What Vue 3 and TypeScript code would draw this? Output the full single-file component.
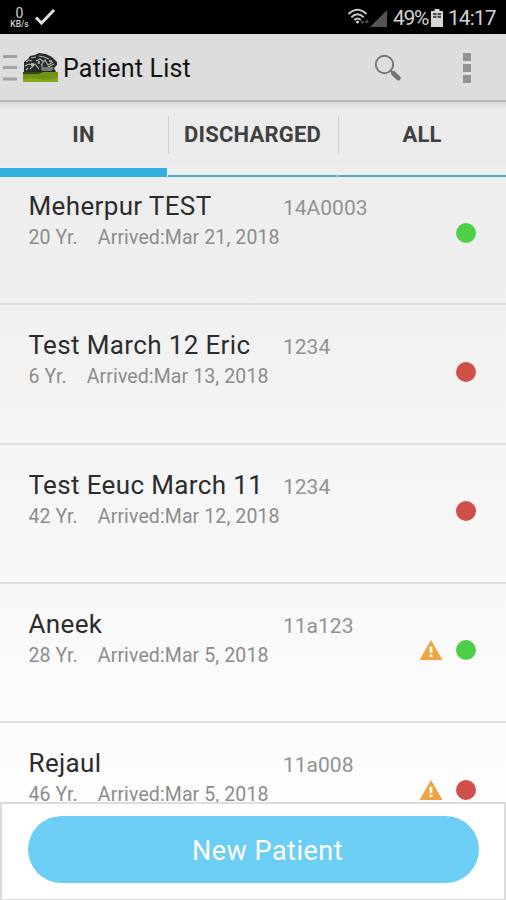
<script setup lang="ts">
interface Patient {
  name: string
  code: string
  age: number
  arrived: string
  status: 'ok' | 'alert'
  warning: boolean
}

const tabs: string[] = ['IN', 'DISCHARGED', 'ALL']
const activeTab = 'IN'

const patients: Patient[] = [
  { name: 'Meherpur TEST', code: '14A0003', age: 20, arrived: 'Mar 21, 2018', status: 'ok', warning: false },
  { name: 'Test March 12 Eric', code: '1234', age: 6, arrived: 'Mar 13, 2018', status: 'alert', warning: false },
  { name: 'Test Eeuc March 11', code: '1234', age: 42, arrived: 'Mar 12, 2018', status: 'alert', warning: false },
  { name: 'Aneek', code: '11a123', age: 28, arrived: 'Mar 5, 2018', status: 'ok', warning: true },
  { name: 'Rejaul', code: '11a008', age: 46, arrived: 'Mar 5, 2018', status: 'alert', warning: true },
]
</script>

<template>
  <div class="screen">
    <header class="status">
      <div class="speed"><span class="speed-num">0</span><span class="speed-unit">KB/s</span></div>
      <svg class="check" width="22" height="18" viewBox="0 0 22 18">
        <path d="M2 9.500 7.500 15 20 2" fill="none" stroke="#dedede" stroke-width="3" />
      </svg>
      <svg class="wifi" width="24" height="20" viewBox="0 0 24 20">
        <g fill="none" stroke="#c8c8c8" stroke-width="1.900">
          <path d="M1.500 7Q10.500-1.500 19.500 7" />
          <path d="M4.300 10.200Q10.500 4.200 16.700 10.200" />
          <path d="M7.200 13Q10.500 9.900 13.800 13" />
        </g>
        <circle cx="10.500" cy="15" r="1.600" fill="#c8c8c8" />
        <path d="M13.500 14h4l-2 4zM18 16h4l-2-4z" fill="#4a4a4a" />
      </svg>
      <svg class="signal" width="17" height="17" viewBox="0 0 17 17"><path d="M0 17 17 0V17Z" fill="#545454" /></svg>
      <span class="percent">49%</span>
      <svg class="battery" width="12" height="18" viewBox="0 0 12 18">
        <path d="M3.500 0h5v2.500h-5zM0 2h12v16H0z" fill="#d6d6d6" />
        <path d="M2 4h3.500v2.300H2zM6.500 4H10v2.300H6.500zM2 7h3.500v2H2zM6.500 7H10v2H6.500z" fill="#4c4c4c" />
      </svg>
      <span class="clock">14:17</span>
    </header>

    <div class="appbar">
      <svg class="drawer" width="14" height="28" viewBox="0 0 14 28">
        <path d="M0 2.500h14M0 13.500h14M0 25h14" stroke="#a2a2a2" stroke-width="3.200" />
      </svg>
      <svg class="logo" width="35" height="29" viewBox="0 0 35 29">
        <path d="M1 20V9L5 6 7 3 12 2 16 0 23 1 29 4 34 9V12L31 15 33 19V20Z" fill="#282c28" />
        <g fill="none" stroke="#aeb3ad" stroke-width="1.100">
          <path d="M3 9 6 7 9 8M8 5l5-1M16 3l5 1 5 2M2 13l4-2 5 1M7 16l5-5 4 5M13 8l4-2 4 3M18 12l4-5 3 5 5-3M25 14l6-3M19 17v-6M5 15l-2 2" />
        </g>
        <path d="M20 14h11l-2 4H19Z" fill="#777c77" />
        <path d="M8 10h3v3H8zM15 8h2v3h-2zM26 7h3v2h-3z" fill="#d0d2cf" opacity=".7" />
        <path d="M0 19h35v10H0z" fill="#6f9416" />
        <path d="M0 19h20l-4 2H0z" fill="#34451a" />
        <path d="M0 26q8-2 17 0t18-2v5H0z" fill="#82a916" />
      </svg>
      <h1 class="title">Patient List</h1>
      <svg class="search" width="28" height="28" viewBox="0 0 28 28">
        <circle cx="10.500" cy="10.500" r="8.700" fill="none" stroke="#747474" stroke-width="1.900" />
        <path d="M16.500 16.500 19 19" stroke="#747474" stroke-width="2" />
        <path d="M19.500 19.500 24.300 24" stroke="#747474" stroke-width="5" stroke-linecap="round" />
      </svg>
      <div class="more"><i /><i /><i /></div>
    </div>

    <nav class="tabs">
      <div v-for="tab in tabs" :key="tab" class="tab" :class="{ active: tab === activeTab }">
        <span>{{ tab }}</span>
      </div>
    </nav>

    <main class="list">
      <article v-for="p in patients" :key="p.name" class="row">
        <div class="top">
          <span class="name">{{ p.name }}</span>
          <span class="code">{{ p.code }}</span>
        </div>
        <div class="meta">
          <span>{{ p.age }} Yr.</span>
          <span class="arrived">Arrived:{{ p.arrived }}</span>
        </div>
        <div class="marks">
          <svg v-if="p.warning" width="24" height="20" viewBox="0 0 24 20">
            <path d="M12 0 23.500 20H.500Z" fill="#eba544" />
            <path d="M10.600 6.700h2.800v6h-2.800zM10.600 14.500h2.800v2.500h-2.800z" fill="#fff" />
          </svg>
          <span class="dot" :class="p.status" />
        </div>
      </article>
    </main>

    <footer class="footer"><button class="new">New Patient</button></footer>
  </div>
</template>

<style>
body {
  margin: 0;
}
</style>

<style scoped>
.screen {
  width: 506px;
  height: 900px;
  display: flex;
  flex-direction: column;
  overflow: hidden;
  font-family: Roboto, sans-serif;
  background: linear-gradient(#ebebeb 100px, #f0f0f0 300px, #f8f8f8 560px, #fdfdfd 800px);
}
.status {
  height: 34px;
  flex: none;
  box-sizing: border-box;
  padding: 0 11px 0 9px;
  display: flex;
  align-items: center;
  background: #000;
  color: #d2d2d2;
}
.speed {
  width: 21px;
  height: 21px;
  display: flex;
  flex-direction: column;
  align-items: center;
  line-height: 1;
}
.speed-num {
  font-size: 14px;
  line-height: 13px;
}
.speed-unit {
  font-size: 8.500px;
  line-height: 8px;
  font-weight: 500;
}
.check {
  margin-left: 4px;
}
.wifi {
  margin-left: auto;
}
.signal {
  margin: 2px 6px 0 -1px;
}
.percent,
.clock {
  font-size: 21px;
  line-height: 34px;
  padding-top: 2px;
  white-space: nowrap;
}
.percent {
  width: 36px;
  letter-spacing: -1.300px;
}
.battery {
  margin: 2px 5px 0 2px;
}
.clock {
  width: 47px;
  letter-spacing: -0.950px;
}
.appbar {
  height: 68px;
  flex: none;
  box-sizing: border-box;
  padding: 0 35px 0 3px;
  display: flex;
  align-items: center;
  background: #dddddd;
  border-bottom: 2px solid #b9b9b9;
}
.drawer {
  margin-top: 2px;
}
.logo {
  margin-left: 6px;
}
.title {
  margin: 4px 0 0 5px;
  font-size: 25px;
  line-height: 30px;
  font-weight: 400;
  letter-spacing: 0.200px;
  color: #111;
  white-space: nowrap;
}
.search {
  margin-left: auto;
  margin-top: 2px;
}
.more {
  margin: 2px 0 0 61px;
  display: flex;
  flex-direction: column;
  gap: 3px;
}
.more i {
  width: 8px;
  height: 8px;
  background: #939393;
}
.tabs {
  height: 64px;
  flex: none;
  display: grid;
  grid-template-columns: 167px 169px 168px;
  column-gap: 1px;
  background: linear-gradient(#d9d9d9, #ebebeb 7px);
}
.tab {
  position: relative;
  box-sizing: border-box;
  border-bottom: 2px solid #4aadd0;
  text-align: center;
  font-size: 22px;
  line-height: 66px;
  font-weight: 700;
  letter-spacing: 0.200px;
  color: #404040;
}
.tab.active {
  border-bottom: 9px solid #31b0df;
}
.tab + .tab::before {
  content: '';
  position: absolute;
  left: 0;
  top: 14px;
  width: 1px;
  height: 37px;
  background: #cecece;
}
.list {
  flex: 1;
  min-height: 0;
  overflow: hidden;
}
.row {
  position: relative;
  height: 139.300px;
  box-sizing: border-box;
  padding: 23px 30px 0 28.500px;
  border-bottom: 2px solid #dedede;
}
.top {
  display: flex;
  align-items: baseline;
  height: 35px;
}
.name {
  width: 254.500px;
  font-size: 26px;
  line-height: 34px;
  letter-spacing: 0.360px;
  color: #2c2c2c;
  white-space: nowrap;
}
.code {
  font-size: 21px;
  color: #929292;
}
.meta {
  display: flex;
  gap: 20px;
  font-size: 19.500px;
  line-height: 28px;
  letter-spacing: 0.110px;
  color: #8c8c8c;
  white-space: nowrap;
}
.marks {
  position: absolute;
  right: 30px;
  top: 56.500px;
  height: 20px;
  display: flex;
  align-items: center;
  gap: 13px;
}
.dot {
  width: 20px;
  height: 20px;
  border-radius: 50%;
}
.dot.ok {
  background: #4dcf49;
}
.dot.alert {
  background: #ce5048;
}
.footer {
  height: 98px;
  flex: none;
  box-sizing: border-box;
  border: 2px solid #dcdcdc;
  border-bottom-width: 1px;
  background: #fff;
  padding: 12px 25px 0 26px;
}
.new {
  display: block;
  width: 100%;
  height: 67px;
  border: 0;
  border-radius: 34px;
  padding: 3px 0 0 28px;
  background: #6ccef5;
  color: #fff;
  font: 400 27px Roboto, sans-serif;
  letter-spacing: 0.500px;
}
</style>
